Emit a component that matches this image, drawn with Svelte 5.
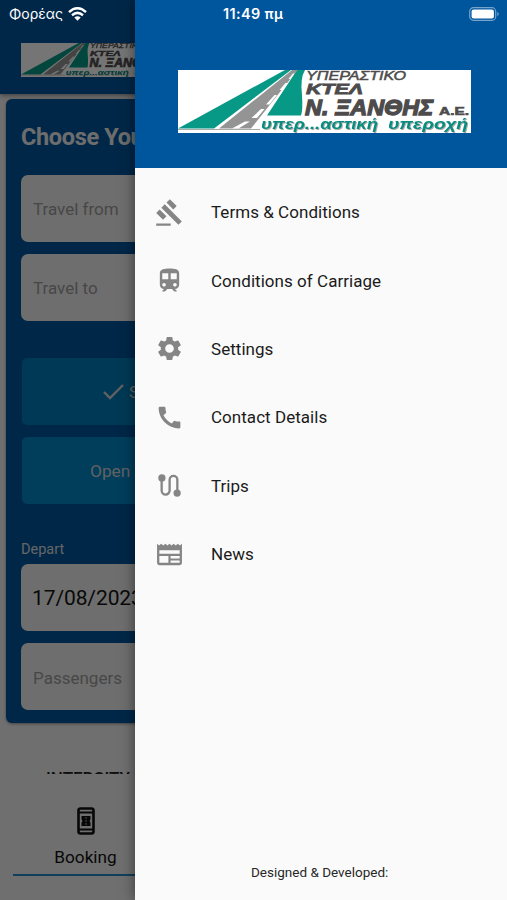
<script>
  const items = [
    { label: 'Terms & Conditions', icon: 'gavel' },
    { label: 'Conditions of Carriage', icon: 'train' },
    { label: 'Settings', icon: 'settings' },
    { label: 'Contact Details', icon: 'phone' },
    { label: 'Trips', icon: 'route' },
    { label: 'News', icon: 'news' }
  ];
  const paths = {
    gavel: 'M1 21h12v2H1zM5.245 8.07l2.83-2.827 14.14 14.142-2.828 2.828zM12.317 1l5.657 5.656-2.83 2.83-5.654-5.66zM3.825 9.485l5.657 5.657-2.828 2.828-5.657-5.657z',
    train: 'M12 2c-4 0-8 .5-8 4v9.5C4 17.43 5.57 19 7.5 19L6 20.5v.5h2.23l2-2H14l2 2h2v-.5L16.5 19c1.93 0 3.5-1.57 3.5-3.5V6c0-3.5-3.58-4-8-4zM7.5 17c-.83 0-1.5-.67-1.5-1.5S6.67 14 7.5 14s1.5.67 1.5 1.5S8.33 17 7.5 17zm3.5-6H6V6h5v5zm2 0V6h5v5h-5zm3.5 6c-.83 0-1.5-.67-1.5-1.5s.67-1.5 1.5-1.5 1.5.67 1.5 1.5-.67 1.5-1.5 1.5z',
    settings: 'M19.14 12.94c.04-.3.06-.61.06-.94 0-.32-.02-.64-.07-.94l2.03-1.58c.18-.14.23-.41.12-.61l-1.92-3.32c-.12-.22-.37-.29-.59-.22l-2.39.96c-.5-.38-1.03-.7-1.62-.94l-.36-2.54c-.04-.24-.24-.41-.48-.41h-3.84c-.24 0-.43.17-.47.41l-.36 2.54c-.59.24-1.13.57-1.62.94l-2.39-.96c-.22-.08-.47 0-.59.22L2.74 8.87c-.12.21-.08.47.12.61l2.03 1.58c-.05.3-.09.63-.09.94s.02.64.07.94l-2.03 1.58c-.18.14-.23.41-.12.61l1.92 3.32c.12.22.37.29.59.22l2.39-.96c.5.38 1.03.7 1.62.94l.36 2.54c.05.24.24.41.48.41h3.84c.24 0 .44-.17.47-.41l.36-2.54c.59-.24 1.13-.56 1.62-.94l2.39.96c.22.08.47 0 .59-.22l1.92-3.32c.12-.22.07-.47-.12-.61l-2.01-1.58zM12 15.6c-1.98 0-3.6-1.62-3.6-3.6s1.62-3.6 3.6-3.6 3.6 1.62 3.6 3.6-1.62 3.6-3.6 3.6z',
    phone: 'M20.01 15.38c-1.23 0-2.42-.2-3.53-.56-.35-.12-.74-.03-1.01.24l-1.57 1.97c-2.83-1.35-5.48-3.9-6.89-6.83l1.95-1.66c.27-.28.35-.67.24-1.02-.37-1.11-.56-2.3-.56-3.53 0-.54-.45-.99-.99-.99H4.19C3.65 3 3 3.24 3 3.99 3 13.28 10.73 21 20.01 21c.71 0 .99-.63.99-1.18v-3.45c0-.54-.45-.99-.99-.99z'
  };
</script>

{#snippet logo()}
  <svg class="logo" viewBox="0 0 293 63" preserveAspectRatio="none">
    <rect width="293" height="63" fill="#fff" />
    <path d="M119 0H127Q122 8 124 25Q125 40 123 45.5H89z" fill="#079886" />
    <path d="M107 0L0 58.5H36L113 0z" fill="#079886" />
    <path d="M114 0L41 58.5H73L119.5 0z" fill="#949494" />
    <path d="M115 3.5L110.5 9H112.5L116.5 3.5zM107.5 13L101.500 20H104L109.500 13zM96.500 25L88 34.500H91.500L99 25zM83 39L73.500 48H79L86.500 39zM67 51.500L54 58.500H60.500L72 51.500z" fill="#fff" />
    <path d="M0 59.5H82" stroke="#aaa" />
    <g font-family="Liberation Sans" fill="#4d4b4c" stroke="#4d4b4c" font-style="italic">
      <text x="128" y="10" font-size="13.5" stroke-width=".5" textLength="100" lengthAdjust="spacingAndGlyphs">ΥΠΕΡΑΣΤΙΚΟ</text>
      <text x="128" y="24.3" font-size="15" font-weight="bold" stroke-width=".8" textLength="57" lengthAdjust="spacingAndGlyphs">ΚΤΕΛ</text>
      <text x="127" y="45" font-size="23" font-weight="bold" stroke-width="1.3" textLength="128" lengthAdjust="spacingAndGlyphs">Ν. ΞΑΝΘΗΣ</text>
      <text x="261" y="45" font-size="11" font-weight="bold" font-style="normal" stroke-width=".6" textLength="30" lengthAdjust="spacingAndGlyphs">Α.Ε.</text>
    </g>
    <g class="slogan" font-family="Liberation Sans" font-size="14.5" font-weight="bold" font-style="italic" fill="#078d80">
      <text x="83" y="59" textLength="117" lengthAdjust="spacingAndGlyphs">υπερ...αστική</text>
      <text x="210" y="59" textLength="80" lengthAdjust="spacingAndGlyphs">υπεροχή</text>
    </g>
  </svg>
{/snippet}

<div class="app">
  <div class="page">
    <header class="topbar">{@render logo()}</header>
    <main>
      <section class="card">
        <h1>Choose Your Trip</h1>
        <div class="field">Travel from</div>
        <div class="field second">Travel to</div>
        <div class="button single">
          <svg width="22" height="18" viewBox="0 0 22 18"><path d="M1 9l6 6L20 2" fill="none" stroke="currentColor" stroke-width="2.4" /></svg>
          <span>Single</span>
        </div>
        <div class="button open">Open Return</div>
        <div class="label">Depart</div>
        <div class="field date">17/08/2023</div>
        <div class="field last">Passengers</div>
      </section>
      <div class="heading">INTERCITY KTEL</div>
    </main>
    <nav>
      <div class="tab">
        <svg width="18" height="28" viewBox="0 0 18 28">
          <rect x="1.5" y="1.5" width="15" height="25" rx="2" fill="none" stroke="currentColor" stroke-width="2.6" />
          <path d="M2 5.5h14M2 22.5h14" stroke="currentColor" stroke-width="2" />
          <path d="M4.500 9h9v3.2q-1.8 1.8 0 3.6V19h-9v-3.2q1.8-1.8 0-3.6z" fill="currentColor" />
          <path d="M9 10v2M9 13v2M9 16v2" stroke="#aaa" stroke-width="1" />
        </svg>
        <span>Booking</span>
      </div>
    </nav>
  </div>
  <div class="scrim"></div>

  <aside>
    <div class="brand">{@render logo()}</div>
    <ul>
      {#each items as item}
        <li>
          <svg width="29" height="29" viewBox="0 0 24 24" fill="currentColor">
            {#if item.icon === 'route'}
              <path d="M5.5 5v11.2a3.3 3.3 0 0 0 6.6 0V7.3a3.2 3.2 0 0 1 6.4 0V18" fill="none" stroke="currentColor" stroke-width="1.9" />
              <circle cx="5.7" cy="5.7" r="3" /><circle cx="18.3" cy="18.3" r="3" />
            {:else if item.icon === 'news'}
              <path fill-rule="evenodd" d="M1.7 3.2l1.7 1.4 1.7-1.4 1.7 1.4 1.8-1.4 1.7 1.4L12 3.2l1.7 1.4 1.7-1.4 1.8 1.4 1.7-1.4 1.7 1.4 1.7-1.4v15.6c0 1.1-.9 2-2 2H3.7c-1.1 0-2-.9-2-2zM3.6 8.4v3h16.8v-3zm0 4.9v5.6h7.5v-5.6zm9.3 0v2h7.5v-2zm0 3.7v1.9h7.5V17z" />
            {:else}
              <path d={paths[item.icon]} />
            {/if}
          </svg>
          <span>{item.label}</span>
        </li>
      {/each}
    </ul>
    <footer>Designed &amp; Developed:</footer>
  </aside>

  <div class="status">
    <div class="carrier">
      <span>Φορέας</span>
      <svg width="19" height="14" viewBox="0 0 19 14">
        <path d="M1 5.1Q9.5-2.5 18 5.1M4 8.2Q9.5 3.6 15 8.2" fill="none" stroke="#fff" stroke-width="2.5" />
        <path d="M6.3 10.5Q9.5 8.2 12.7 10.5L9.5 13.7z" fill="#fff" />
      </svg>
    </div>
    <b>11:49 πμ</b>
    <svg class="battery" width="31" height="14" viewBox="0 0 31 14">
      <rect x=".7" y=".7" width="26" height="12.6" rx="3.8" fill="none" stroke="#75a4ce" stroke-width="1.2" />
      <rect x="2.6" y="2.5" width="22.3" height="9" rx="2" fill="#fff" />
      <path d="M28.3 4.7q3 2.3 0 4.6z" fill="#75a4ce" />
    </svg>
  </div>
</div>

<style>
  .app {
    position: relative;
    width: 507px;
    height: 900px;
    overflow: hidden;
    font-family: Roboto, 'Liberation Sans', sans-serif;
    background: #f2f2f2;
  }
  .page { display: flex; flex-direction: column; height: 900px; }
  .topbar {
    box-sizing: border-box;
    flex: none;
    height: 94px;
    padding: 43px 0 0 20.5px;
    background: #00569d;
    box-shadow: 0 1px 5px rgba(0, 0, 0, .5);
  }
  .logo { display: block; }
  .slogan { filter: drop-shadow(1px 1px 0 #aaa); }
  .topbar .logo { width: 158px; height: 34px; }
  main { flex: none; height: 680px; overflow: hidden; }
  .card {
    box-sizing: border-box;
    height: 624px;
    margin: 5px 6px 0;
    padding: 23px 15px 0;
    border-radius: 6px;
    background: #00569d;
    box-shadow: 0 1px 3px rgba(0, 0, 0, .4);
  }
  h1 { margin: 0 0 22px; font-size: 23.5px; line-height: 31px; font-weight: 700; color: #eee; white-space: nowrap; letter-spacing: -.35px; }
  .field {
    box-sizing: border-box;
    height: 67px;
    padding-left: 12px;
    border-radius: 7px;
    background: #f0f0f0;
    color: #9c9c9c;
    font-size: 17px;
    line-height: 69px;
  }
  .second { margin-top: 12px; }
  .button {
    display: flex;
    align-items: center;
    height: 67px;
    margin-left: 1px;
    border-radius: 5px;
    background: #007cb9;
    color: #d3d3d3;
    font-size: 17.3px;
  }
  .single { margin-top: 37px; gap: 4px; padding-left: 81px; }
  .open { margin-top: 12px; padding-left: 68px; background: #0088c8; }
  .label { margin-top: 36px; font-size: 14.5px; line-height: 20px; color: #ddd; }
  .date { margin-top: 4px; padding-left: 11px; color: #151515; font-size: 21px; letter-spacing: -.1px; }
  .last { margin-top: 12px; line-height: 70px; }
  .heading { margin: 45px 0 0 46px; font-size: 17px; line-height: 20px; font-weight: 500; color: #222; }
  nav { flex: 1; padding-left: 13px; }
  .tab {
    box-sizing: border-box;
    display: flex;
    flex-direction: column;
    align-items: center;
    width: 145px;
    height: 102px;
    padding-top: 33px;
    border-bottom: 2px solid #2787c8;
    color: #111;
    font-size: 17.2px;
  }
  .tab span { margin-top: 11px; line-height: 22px; }
  .scrim { position: absolute; inset: 0; background: rgba(0, 0, 0, .54); }
  aside {
    position: absolute;
    inset: 0 0 0 135px;
    display: flex;
    flex-direction: column;
    background: #fafafa;
    box-shadow: 0 0 13px rgba(0, 0, 0, .5);
  }
  .brand { box-sizing: border-box; height: 168px; padding: 70px 0 0 43px; background: #00569d; }
  .brand .logo { width: 293px; height: 63px; }
  ul { margin: 0; padding: 10px 0 0; list-style: none; }
  li { display: flex; align-items: center; gap: 27px; height: 68.4px; padding-left: 20px; color: #858585; }
  li span { color: #1b1b1b; font-size: 17px; letter-spacing: .04px; }
  footer { margin: auto 0 18px 116px; color: #282828; font-size: 13.5px; line-height: 20px; }
  .status {
    position: absolute;
    inset: 0 0 auto;
    display: flex;
    justify-content: space-between;
    height: 27px;
    align-items: center;
    padding: 0 7px 0 9px;
    color: #fff;
    font-family: Inter, 'Liberation Sans', sans-serif;
    font-size: 14px;
  }
  .carrier { display: flex; align-items: center; gap: 5px; width: 214px; }
  .status b { flex: 1; font-size: 14.4px; font-weight: 600; letter-spacing: .4px; }
  .battery { flex: none; }
</style>
